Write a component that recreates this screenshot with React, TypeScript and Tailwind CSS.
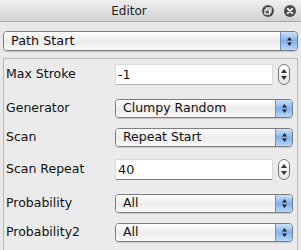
import React from "react";

const font = { fontFamily: '"DejaVu Sans", "Liberation Sans", sans-serif' };

function Arrows() {
  return (
    <svg width="7" height="11" viewBox="0 0 7 11">
      <path d="M3.5 1 L6 4.5 L1 4.5 Z" fill="#222" />
      <path d="M3.5 10 L6 6.5 L1 6.5 Z" fill="#222" />
    </svg>
  );
}

function Select({ value, big }: { value: string; big?: boolean }) {
  return (
    <div
      className={`flex items-stretch ${big ? "h-[20px]" : "h-[19px]"} flex-1 rounded-[4px] border border-[#7d7d7d] overflow-hidden shadow-[0_1px_1px_rgba(0,0,0,0.15)]`}
    >
      <div
        className={`flex-1 flex items-center ${big ? "pl-[7px] text-[12.8px]" : "pl-[7px] text-[12.5px]"} text-[#111] bg-gradient-to-b from-[#ffffff] via-[#ececec] to-[#f8f8f8]`}
      >
        {value}
      </div>
      <div className="w-[17px] flex items-center justify-center border-l border-[#6f8fbf] bg-gradient-to-b from-[#cfe2f8] via-[#7fb1ec] to-[#b9d6f7]">
        <Arrows />
      </div>
    </div>
  );
}

function Field({ value, dark }: { value: string; dark?: boolean }) {
  return (
    <div className="flex items-center flex-1 gap-[5px]">
      <div className="flex-1 h-[21px] flex flex-col bg-white border-t border-l border-r border-[#dadada]">
        <div className="flex-1 flex items-center pl-[2px] text-[12.8px] text-[#111]">{value}</div>
        <div className={`h-[3px] ${dark ? "bg-[#7c7c7c]" : "bg-[#b5b5b5]"}`} />
      </div>
      <div className="w-[12px] h-[21px] rounded-full border border-[#7a7a7a] bg-gradient-to-b from-white to-[#e4e4e4] flex flex-col items-center justify-center gap-[3px] mr-[3px]">
        <svg width="6" height="4" viewBox="0 0 6 4"><path d="M3 0 L6 4 L0 4 Z" fill="#333" /></svg>
        <svg width="6" height="4" viewBox="0 0 6 4"><path d="M3 4 L6 0 L0 0 Z" fill="#333" /></svg>
      </div>
    </div>
  );
}

function Row({ label, className, children }: { label: string; className?: string; children: React.ReactNode }) {
  return (
    <div className={`h-[28px] flex items-center ${className ?? ""}`}>
      <div className="w-[111px] pl-[2px] text-[12.5px] text-[#111]">{label}</div>
      <div className="flex-1 flex pr-[4px]">{children}</div>
    </div>
  );
}

export default function App() {
  return (
    <div className="w-[301px] h-[250px] bg-[#e9e9e9] overflow-hidden" style={font}>
      {/* titlebar */}
      <div className="h-[22px] flex items-center bg-gradient-to-b from-[#efefef] to-[#d2d2d2] border-b border-[#a9a9a9]">
        <div className="flex-1 text-center text-[12px] text-[#222]">Editor</div>
        <div className="flex items-center gap-[10px] pl-[4px] pr-[5px]">
          <svg width="12" height="12" viewBox="0 0 12 12">
            <circle cx="6" cy="6" r="6" fill="#4e4e4e" />
            <rect x="4.5" y="3" width="4.5" height="4" fill="none" stroke="#fff" strokeWidth="1.2" />
            <rect x="3" y="5" width="4.5" height="4" fill="#4e4e4e" stroke="#fff" strokeWidth="1.2" />
          </svg>
          <svg width="12" height="12" viewBox="0 0 12 12">
            <circle cx="6" cy="6" r="6" fill="#4e4e4e" />
            <path d="M3.8 3.8 L8.2 8.2 M8.2 3.8 L3.8 8.2" stroke="#fff" strokeWidth="1.8" strokeLinecap="round" />
          </svg>
        </div>
      </div>
      <div className="px-[3px] pt-[9px]">
        <div className="flex">
          <Select value="Path Start" big />
        </div>
        {/* property panel */}
        <div className="mt-[7px] h-[200px] border-t border-l border-r border-[#b9b9b9] bg-[#ebebeb]">
          <Row label="Max Stroke" className="mt-px">
            <Field value="-1" />
          </Row>
          <Row label="Generator" className="mt-[6px]">
            <Select value="Clumpy Random" />
          </Row>
          <Row label="Scan" className="mt-px">
            <Select value="Repeat Start" />
          </Row>
          <Row label="Scan Repeat" className="mt-[4px]">
            <Field value="40" dark />
          </Row>
          <Row label="Probability" className="mt-[6px]">
            <Select value="All" />
          </Row>
          <Row label="Probability2" className="mt-px">
            <Select value="All" />
          </Row>
        </div>
      </div>
    </div>
  );
}
